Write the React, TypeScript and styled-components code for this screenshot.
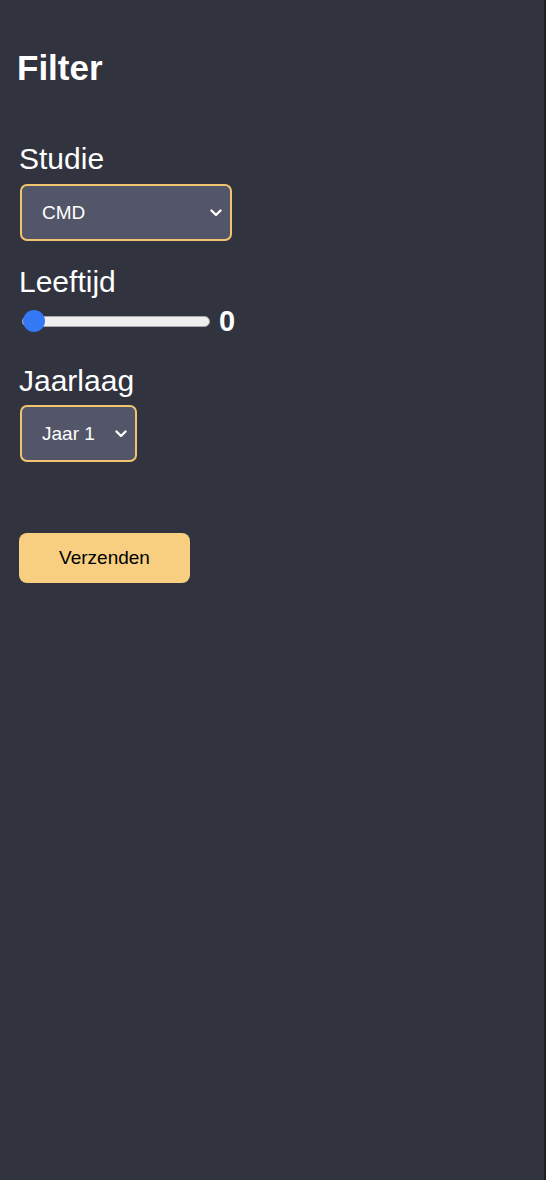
import React, { useState } from "react";
import styled, { createGlobalStyle } from "styled-components";

const GlobalStyle = createGlobalStyle`
  html, body {
    margin: 0;
    padding: 0;
    background: #31333e;
  }
  body {
    font-family: "Liberation Sans", Arial, Helvetica, sans-serif;
    color: #ffffff;
  }
`;

const Page = styled.main`
  box-sizing: border-box;
  min-height: 1180px;
  background: #31333e;
  border-right: 2px solid #1e1f24;
  padding: 48px 20px 0 20px;
`;

const Title = styled.h1`
  margin: 0 0 0 -3px;
  font-size: 35px;
  line-height: 40px;
  font-weight: 700;
  color: #ffffff;
`;

const Form = styled.form`
  display: flex;
  flex-direction: column;
  align-items: flex-start;
  margin-top: 54px;
`;

const Field = styled.div<{ $gap: number; $mt: number }>`
  display: flex;
  flex-direction: column;
  align-items: flex-start;
  gap: ${(p) => p.$gap}px;
  margin-top: ${(p) => p.$mt}px;
`;

const Label = styled.label`
  font-size: 30px;
  line-height: 34px;
  color: #ffffff;
  margin-left: -1px;
`;

const SelectWrap = styled.div<{ $width: number }>`
  position: relative;
  width: ${(p) => p.$width}px;
`;

const Select = styled.select`
  appearance: none;
  -webkit-appearance: none;
  box-sizing: border-box;
  width: 100%;
  height: 57px;
  padding: 0 30px 0 20px;
  background: #535568;
  border: 2px solid #f1c46f;
  border-radius: 7px;
  color: #ffffff;
  font-family: "Liberation Sans", Arial, sans-serif;
  font-size: 19px;
  outline: none;
`;

const Chevron = styled.svg`
  position: absolute;
  right: 10px;
  top: 50%;
  width: 12px;
  height: 8px;
  transform: translateY(-50%);
  pointer-events: none;
`;

const SliderRow = styled.div`
  display: flex;
  align-items: center;
  gap: 9px;
  margin-left: 2px;
`;

const Range = styled.input`
  appearance: none;
  -webkit-appearance: none;
  width: 188px;
  height: 22px;
  margin: 0;
  background: transparent;

  &::-webkit-slider-runnable-track {
    height: 11px;
    box-sizing: border-box;
    background: #efefef;
    border: 1px solid #a9a9ad;
    border-radius: 6px;
  }
  &::-webkit-slider-thumb {
    -webkit-appearance: none;
    width: 22px;
    height: 22px;
    margin-top: -6.5px;
    border-radius: 50%;
    background: #3478f6;
    border: none;
  }
`;

const Value = styled.span`
  font-size: 29px;
  font-weight: 700;
  line-height: 34px;
  color: #ffffff;
`;

const Button = styled.button`
  margin-top: 71px;
  margin-left: -1px;
  width: 171px;
  height: 50px;
  background: #f8cf80;
  border: none;
  border-radius: 8px;
  color: #000000;
  font-family: "Liberation Sans", Arial, sans-serif;
  font-size: 19px;
  cursor: pointer;
`;

const ChevronIcon = () => (
  <Chevron viewBox="0 0 12 8">
    <path d="M1.5 1.5 L6 6 L10.5 1.5" fill="none" stroke="#ffffff" strokeWidth="2.4" strokeLinecap="round" strokeLinejoin="round" />
  </Chevron>
);

export default function App() {
  const [age, setAge] = useState(0);
  return (
    <>
      <GlobalStyle />
      <Page>
        <Title>Filter</Title>
        <Form onSubmit={(e) => e.preventDefault()}>
          <Field $gap={8} $mt={0}>
            <Label htmlFor="studie">Studie</Label>
            <SelectWrap $width={212}>
              <Select id="studie" defaultValue="CMD">
                <option value="CMD">CMD</option>
              </Select>
              <ChevronIcon />
            </SelectWrap>
          </Field>
          <Field $gap={5} $mt={24}>
            <Label htmlFor="leeftijd">Leeftijd</Label>
            <SliderRow>
              <Range
                id="leeftijd"
                type="range"
                min={0}
                max={100}
                value={age}
                onChange={(e) => setAge(Number(e.target.value))}
              />
              <Value>{age}</Value>
            </SliderRow>
          </Field>
          <Field $gap={7} $mt={26}>
            <Label htmlFor="jaarlaag">Jaarlaag</Label>
            <SelectWrap $width={117}>
              <Select id="jaarlaag" defaultValue="1">
                <option value="1">Jaar 1</option>
              </Select>
              <ChevronIcon />
            </SelectWrap>
          </Field>
          <Button type="submit">Verzenden</Button>
        </Form>
      </Page>
    </>
  );
}
